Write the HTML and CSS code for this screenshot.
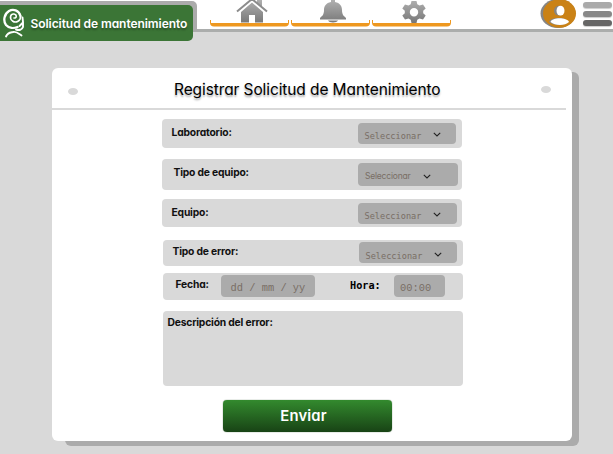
FILE: index.html
```html
<!DOCTYPE html>
<html lang="es">
<head>
<meta charset="utf-8">
<title>Solicitud de mantenimiento</title>
<link rel="stylesheet" href="styles.css">
</head>
<body>
<header class="topbar">
  <div class="tab-back">
    <div class="tab">
      <svg class="logo" width="24" height="30" viewBox="0 0 24 30" fill="none" stroke="#fff" stroke-linecap="round">
        <path d="M18.500 8C17 2 11 .5 7 3C2 6 1 13 4 17C7 20.500 12 20.500 15.500 19" stroke-width="2.300"/>
        <path d="M18.500 8C19 13 14 15.500 10.500 13C7 10 8.500 5.500 12 6C15 6.500 15 10.500 12 10" stroke-width="1.600"/>
        <path d="M20.500 9.500L21 14V19C20 22 17 22.500 14 21.500M17.500 18L20.500 15" stroke-width="1.900"/>
        <path d="M4 28.500C6 24 9 24.500 11 24C14 23 16 25 19.500 27.500" stroke-width="1.900"/>
      </svg>
      <span class="tab-text">Solicitud de mantenimiento</span>
    </div>
  </div>
  <nav class="nav">
    <a class="nav-item">
      <svg width="32" height="23" viewBox="0 0 32 23">
        <defs><linearGradient id="steel" gradientUnits="userSpaceOnUse" x1="0" y1="0" x2="0" y2="23"><stop offset="0" stop-color="#b0b0b0"/><stop offset="1" stop-color="#777"/></linearGradient></defs>
        <path d="M21 0H26V7L21 3Z" fill="url(#steel)"/>
        <path d="M16 2.500L5 12V22.500H13V15H19V22.500H27V12Z" fill="url(#steel)"/>
        <path d="M2 12.500L16 1L30 12.500" fill="none" stroke="#fff" stroke-width="1.500"/>
        <path d="M1 11.500L16 -1L31 11.500" fill="none" stroke="#8c8c8c" stroke-width="2"/>
      </svg>
    </a>
    <a class="nav-item">
      <svg width="32" height="23" viewBox="0 0 32 23" fill="url(#steel)">
        <path d="M14 2V0H18V2C23 3 25 6 25 10C25 15 27 16 29 18V19.500H3V18C5 16 7 15 7 10C7 6 9 3 14 2Z"/>
        <path d="M11 20.500H21C20 23 12 23 11 20.500Z"/>
      </svg>
    </a>
    <a class="nav-item">
      <svg width="26" height="23" viewBox="0 0 26 23">
        <path fill="url(#steel)" fill-rule="evenodd" d="M10.500 1H15.500L16.300 4.300L18.500 5.500L22 4.400L24.700 8.400L22.200 10.800V13.200L24.700 15.600L22 19.600L18.500 18.500L16.300 19.700L15.500 23H10.500L9.700 19.700L7.500 18.500L4 19.600L1.300 15.600L3.800 13.200V10.800L1.300 8.400L4 4.400L7.500 5.500L9.700 4.300ZM13 8A4.200 4.200 0 1 0 13 16.400A4.200 4.200 0 1 0 13 8Z"/>
      </svg>
    </a>
  </nav>
  <div class="account">
    <svg width="38" height="29" viewBox="0 0 38 29">
      <ellipse cx="18" cy="13.500" rx="17.500" ry="14.500" fill="#858585"/>
      <ellipse cx="19.500" cy="13.500" rx="16.500" ry="14.300" fill="#ca8216"/>
      <ellipse cx="19" cy="10.700" rx="5" ry="4.900" fill="#858585"/>
      <ellipse cx="20.500" cy="10.700" rx="4" ry="4.900" fill="#fff"/>
      <path d="M9 22C10 16.500 26 16.500 28 22C24 26 14 26 9 22Z" fill="#858585"/>
      <path d="M10.500 22C12 17 27 17 29 22C25 26 15 26 10.500 22Z" fill="#fff"/>
    </svg>
    <div class="menu"><i class="bar light"></i><i class="bar mid"></i><i class="bar dark"></i></div>
  </div>
</header>
<main class="card">
  <div class="card-head">
    <i class="dot"></i>
    <h1 class="title">Registrar Solicitud de Mantenimiento</h1>
    <i class="dot dot-right"></i>
  </div>
  <form class="form">
    <div class="row lab"><label class="label">Laboratorio:</label>
      <div class="select"><span>Seleccionar</span><svg class="chev" width="8" height="5" viewBox="0 0 8 5"><path d="M.8 .8L4 4L7.200 .8"/></svg></div></div>
    <div class="row kind"><label class="label">Tipo de equipo:</label>
      <div class="select sans"><span>Seleccionar</span><svg class="chev" width="8" height="5" viewBox="0 0 8 5"><path d="M.8 .8L4 4L7.200 .8"/></svg></div></div>
    <div class="row team"><label class="label">Equipo:</label>
      <div class="select"><span>Seleccionar</span><svg class="chev" width="8" height="5" viewBox="0 0 8 5"><path d="M.8 .8L4 4L7.200 .8"/></svg></div></div>
    <div class="row fault"><label class="label">Tipo de error:</label>
      <div class="select"><span>Seleccionar</span><svg class="chev" width="8" height="5" viewBox="0 0 8 5"><path d="M.8 .8L4 4L7.200 .8"/></svg></div></div>
    <div class="row when"><label class="label">Fecha:</label>
      <div class="field date">dd / mm / yy</div>
      <label class="label-hour">Hora:</label>
      <div class="field hour">00:00</div></div>
    <div class="row notes"><label class="label">Descripción del error:</label></div>
    <button class="send" type="button">Enviar</button>
  </form>
</main>
</body>
</html>
```
FILE: styles.css
```css
* { box-sizing: border-box; }
body {
  margin: 0;
  width: 613px;
  height: 454px;
  overflow: hidden;
  background: #d9d9d9;
  color: #111;
  font-family: Inter, Lato, sans-serif;
  font-feature-settings: "cv11";
}
.topbar {
  display: flex;
  height: 31.500px;
  background: #fff;
  border-bottom: 3px solid #abadac;
}
.tab-back {
  width: 196.500px;
  height: 30px;
  margin-top: 1px;
  padding-top: 4px;
  background: #ababab;
  border-radius: 0 5px 0 0;
}
.tab {
  display: flex;
  align-items: center;
  width: 193px;
  height: 36px;
  padding-left: 2px;
  background: #3b7536;
  border-radius: 0 5px 5px 0;
}
.logo { flex: none; margin-right: 4.500px; }
.tab-text {
  color: #fff;
  font-size: 12px;
  font-weight: 600;
  letter-spacing: -.06px;
  white-space: nowrap;
  text-shadow: 0 2px 2px #0005;
}
.nav { display: flex; gap: 2px; margin-left: 13.500px; }
.nav-item {
  display: flex;
  justify-content: center;
  width: 79px;
  height: 26.500px;
  padding-left: 4px;
  border: solid #ee981f;
  border-width: 0 1px 4px;
  border-image: linear-gradient(transparent 20px, #ee981f 20px) 0 1 4;
  clip-path: inset(0 round 0 0 4px 4px);
}
.nav-item svg { flex: none; }
.account { display: flex; margin-left: 89px; gap: 4.500px; }
.menu { display: flex; flex-direction: column; gap: 3px; padding-top: 2px; }
.bar {
  width: 29px;
  height: 6px;
  border-radius: 3px;
  box-shadow: 0 1px 1px #0003;
}
.light { background: #aaa; }
.mid { background: #888; }
.dark { background: #666; }
.card {
  position: relative;
  z-index: 0;
  width: 520px;
  height: 373px;
  margin: 36.500px 0 0 52px;
}
.card::before, .card::after {
  content: "";
  position: absolute;
  z-index: -1;
  inset: 0;
  border-radius: 6px;
  background: #fff;
}
.card::before { inset: 4px -7px -5px 13px; background: #ababab; }
.card-head {
  display: flex;
  align-items: center;
  height: 42px;
  width: 514px;
  padding-left: 16px;
  border-bottom: 2px solid #d9d9d9;
}
.dot { width: 10px; height: 7px; border-radius: 50%; background: #d9d9d9; margin-top: 7px; }
.dot-right { margin: 2px 0 0 100px; }
.title {
  margin: 2px 0 0 96px;
  width: 267px;
  font-size: 15.500px;
  font-weight: 400;
  letter-spacing: -.1px;
  white-space: nowrap;
  color: #000;
  text-shadow: 0 2px 2px #0005;
}
.form { padding: 9px 0 0 110px; }
.row {
  display: flex;
  align-items: flex-start;
  width: 300px;
  background: #d9d9d9;
  border-radius: 4px;
}
.label {
  font-size: 10.300px;
  font-weight: 650;
  line-height: 14px;
  letter-spacing: -.18px;
  white-space: nowrap;
}
.lab { height: 28.500px; padding: 5.500px 6px 0 9.500px; }
.kind { height: 31px; margin-top: 11.500px; padding: 5.500px 4px 0 11.500px; }
.team { height: 28px; margin-top: 9px; padding: 6px 5.500px 0 9.500px; }
.fault { height: 26px; margin: 12.500px 0 0 1px; padding: 4.500px 6px 0 9.500px; }
.when { height: 27px; margin: 7.500px 0 0 1px; padding: 3.500px 18px 0 12.500px; }
.notes { height: 75px; margin: 10.500px 0 0 1px; padding: 4px 4.500px; }
.select {
  display: flex;
  align-items: center;
  width: 98.500px;
  height: 20.500px;
  margin: -1.500px 0 0 auto;
  padding: 6px 0 0 7px;
  border-radius: 4px;
  background: #ababab;
  color: #796e65;
  font: 8.600px "DejaVu Sans Mono", monospace;
}
.select span { width: 57px; white-space: nowrap; }
.sans { width: 100px; height: 23px; padding-top: 3px; font: 8.500px Inter, sans-serif; font-feature-settings: "cv11"; letter-spacing: -.2px; }
.sans span { width: 46px; }
.team .select { margin-top: -2.500px; width: 99px; height: 21px; }
.fault .select { margin-top: -2px; height: 21px; }
.chev { margin-left: 11.500px; fill: none; stroke: #222; stroke-width: 1.100; }
.team .chev, .lab .chev, .fault .chev { margin-top: -3px; }
.field {
  height: 22.500px;
  margin-top: -2px;
  border-radius: 4px;
  background: #ababab;
  color: #796e65;
  font: 10.400px/26px "Liberation Mono", monospace;
  white-space: pre;
}
.when .label { width: 45.500px; }
.date { width: 94px; padding-left: 9.500px; }
.label-hour {
  width: 44px;
  margin-left: 35px;
  color: #000;
  font: bold 10.200px/18px "DejaVu Sans Mono", monospace;
}
.hour { width: 51px; padding-left: 6px; }
.send {
  display: block;
  width: 169px;
  height: 32.500px;
  margin: 14px 0 0 61px;
  padding: 0 8px 0 0;
  border: 0;
  border-radius: 4px;
  background: linear-gradient(#338a2e, #184315);
  box-shadow: 0 0 1px #184315;
  color: #fff;
  font: 600 14.800px Inter, sans-serif;
  font-feature-settings: "cv11";
  letter-spacing: .15px;
}
```
